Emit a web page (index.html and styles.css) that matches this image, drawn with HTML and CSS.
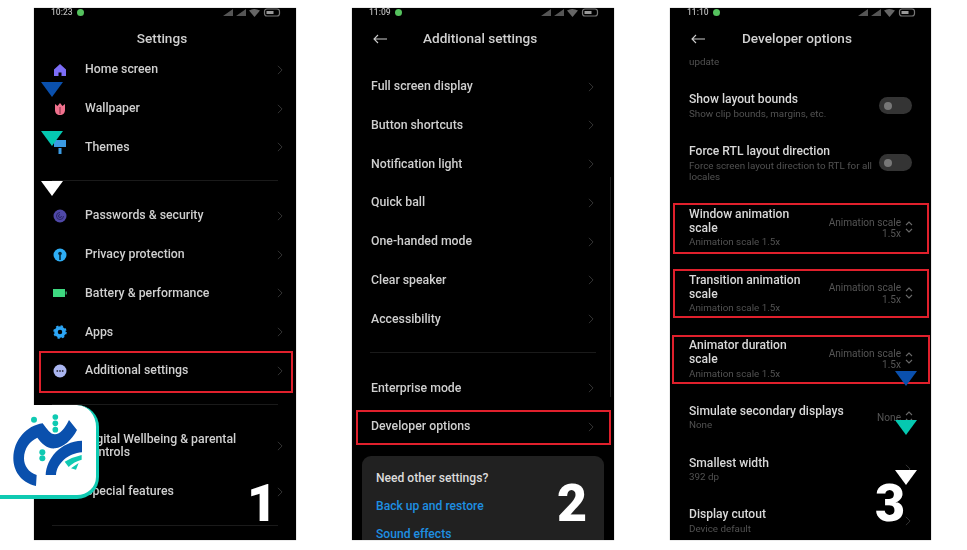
FILE: index.html
```html
<!DOCTYPE html>
<html lang="en">
<head>
<meta charset="utf-8">
<title>Developer options steps</title>
<link rel="stylesheet" href="styles.css">
</head>
<body>
<svg class="defs" width="0" height="0" aria-hidden="true">
  <defs>
    <symbol id="chev" viewBox="0 0 7 12"><path d="M1 1l5 5-5 5" fill="none" stroke="#333" stroke-width="1.2"/></symbol>
    <symbol id="updown" viewBox="0 0 8 14"><path d="M1 5l3-3 3 3M1 9l3 3 3-3" fill="none" stroke="#6a6a6a" stroke-width="1.1"/></symbol>
    <symbol id="stat" viewBox="0 0 58 9">
      <path d="M0 8L10 1v7z M13 8L23 1v7z" fill="#555"/>
      <path d="M26 2.5q5-3 11 0L31.500 9z" fill="#666"/>
      <rect x="41.500" y="1" width="15" height="7" rx="2.500" fill="none" stroke="#777" stroke-width="1.200"/>
      <rect x="43.500" y="3" width="7" height="3" fill="#999"/>
    </symbol>
    <symbol id="back" viewBox="0 0 14 10"><path d="M14 5H1M5 1L1 5l4 4" fill="none" stroke="#ccc" stroke-width="1.100"/></symbol>
  </defs>
</svg>

<main class="stage">
  <section class="phone phone-first">
    <div class="status"><span class="time">10:23</span><i class="dot"></i><svg class="stat"><use href="#stat"/></svg></div>
    <h1 class="title title-center">Settings</h1>
    <ul class="list">
      <li class="row"><svg class="ico" viewBox="0 0 14 14"><path d="M7 1l6 5.500V13H8.500V9.500h-3V13H1V6.500z" fill="#7c6df7"/></svg><span class="label">Home screen</span><svg class="chev"><use href="#chev"/></svg></li>
      <li class="row"><svg class="ico" viewBox="0 0 14 14"><path d="M2 2l2.500 2L7 1l2.500 3L12 2v6c0 3-2 5-5 5s-5-2-5-5z" fill="#f0718d"/><path d="M7 5v7" stroke="#7a2c40"/></svg><span class="label">Wallpaper</span><svg class="chev"><use href="#chev"/></svg></li>
      <li class="row"><svg class="ico" viewBox="0 0 14 14"><path d="M1 0h12v7H1zM5.500 8h3v6h-3z" fill="#3b9ae2"/></svg><span class="label">Themes</span><svg class="chev"><use href="#chev"/></svg></li>
      <li class="rule rule-first"></li>
      <li class="row"><svg class="ico" viewBox="0 0 14 14"><circle cx="7" cy="7" r="6.500" fill="#4f48a8"/><path d="M7 3.500a3.500 3.500 0 1 0 3.500 3.500M7 5.500a1.500 1.500 0 1 0 1.500 1.500" fill="none" stroke="#2a2666"/></svg><span class="label">Passwords &amp; security</span><svg class="chev"><use href="#chev"/></svg></li>
      <li class="row"><svg class="ico" viewBox="0 0 14 14"><circle cx="7" cy="7" r="6.500" fill="#2eaef6"/><circle cx="7" cy="5.500" r="1.800" fill="#06283c"/><path d="M6.200 6h1.600v6H6.200z" fill="#06283c"/></svg><span class="label">Privacy protection</span><svg class="chev"><use href="#chev"/></svg></li>
      <li class="row"><svg class="ico" viewBox="0 0 14 14"><path d="M0 3h12v8H0z" fill="#3ed880"/><path d="M12.500 5.500H14v3h-1.500z" fill="#2a9a5c"/></svg><span class="label">Battery &amp; performance</span><svg class="chev"><use href="#chev"/></svg></li>
      <li class="row"><svg class="ico" viewBox="0 0 14 14"><circle cx="7" cy="7" r="4" fill="none" stroke="#2ca6f6" stroke-width="3.500"/><circle cx="7" cy="7" r="6" fill="none" stroke="#2ca6f6" stroke-width="1.500" stroke-dasharray="2.400 2.300"/></svg><span class="label">Apps</span><svg class="chev"><use href="#chev"/></svg></li>
      <li class="row"><svg class="ico" viewBox="0 0 14 14"><circle cx="7" cy="7" r="6.500" fill="#aab5f0"/><circle cx="4.300" cy="7" r=".9" fill="#334"/><circle cx="7" cy="7" r=".9" fill="#334"/><circle cx="9.700" cy="7" r=".9" fill="#334"/></svg><span class="label">Additional settings</span><svg class="chev"><use href="#chev"/></svg></li>
      <li class="rule"></li>
      <li class="row row-tall"><span class="ico"></span><span class="label">Digital Wellbeing &amp; parental controls</span><svg class="chev"><use href="#chev"/></svg></li>
      <li class="row"><span class="ico"></span><span class="label">Special features</span><svg class="chev"><use href="#chev"/></svg></li>
      <li class="rule"></li>
    </ul>
  </section>

  <section class="phone phone-second">
    <div class="status"><span class="time">11:09</span><i class="dot"></i><svg class="stat"><use href="#stat"/></svg></div>
    <h1 class="title"><svg class="back"><use href="#back"/></svg>Additional settings</h1>
    <ul class="list list-plain">
      <li class="row"><span class="label">Full screen display</span><svg class="chev"><use href="#chev"/></svg></li>
      <li class="row"><span class="label">Button shortcuts</span><svg class="chev"><use href="#chev"/></svg></li>
      <li class="row"><span class="label">Notification light</span><svg class="chev"><use href="#chev"/></svg></li>
      <li class="row"><span class="label">Quick ball</span><svg class="chev"><use href="#chev"/></svg></li>
      <li class="row"><span class="label">One-handed mode</span><svg class="chev"><use href="#chev"/></svg></li>
      <li class="row"><span class="label">Clear speaker</span><svg class="chev"><use href="#chev"/></svg></li>
      <li class="row"><span class="label">Accessibility</span><svg class="chev"><use href="#chev"/></svg></li>
      <li class="rule"></li>
      <li class="row"><span class="label">Enterprise mode</span><svg class="chev"><use href="#chev"/></svg></li>
      <li class="row"><span class="label">Developer options</span><svg class="chev"><use href="#chev"/></svg></li>
    </ul>
    <div class="card">
      <p class="card-head">Need other settings?</p>
      <p class="card-link">Back up and restore</p>
      <p class="card-link">Sound effects</p>
    </div>
    <i class="scrollbar"></i>
  </section>

  <section class="phone phone-narrow">
    <div class="status"><span class="time">11:10</span><i class="dot"></i><svg class="stat"><use href="#stat"/></svg></div>
    <h1 class="title"><svg class="back"><use href="#back"/></svg>Developer options</h1>
    <div class="prefs">
      <p class="sub">update</p>
      <div class="pref"><div class="pref-text"><p class="name">Show layout bounds</p><p class="sub">Show clip bounds, margins, etc.</p></div><span class="toggle"><i></i></span></div>
      <div class="pref"><div class="pref-text"><p class="name">Force RTL layout direction</p><p class="sub sub-limit">Force screen layout direction to RTL for all locales</p></div><span class="toggle"><i></i></span></div>
      <div class="pref"><div class="pref-text"><p class="name name-wrap">Window animation scale</p><p class="sub">Animation scale 1.5x</p></div><span class="value value-wide">Animation scale 1.5x</span><svg class="updown"><use href="#updown"/></svg></div>
      <div class="pref"><div class="pref-text"><p class="name name-wrap">Transition animation scale</p><p class="sub">Animation scale 1.5x</p></div><span class="value value-wide">Animation scale 1.5x</span><svg class="updown"><use href="#updown"/></svg></div>
      <div class="pref"><div class="pref-text"><p class="name name-wrap">Animator duration scale</p><p class="sub">Animation scale 1.5x</p></div><span class="value value-wide">Animation scale 1.5x</span><svg class="updown"><use href="#updown"/></svg></div>
      <div class="pref"><div class="pref-text"><p class="name">Simulate secondary displays</p><p class="sub">None</p></div><span class="value">None</span><svg class="updown"><use href="#updown"/></svg></div>
      <div class="pref"><div class="pref-text"><p class="name">Smallest width</p><p class="sub">392 dp</p></div><svg class="chev chev-pref"><use href="#chev"/></svg></div>
      <div class="pref"><div class="pref-text"><p class="name">Display cutout</p><p class="sub">Device default</p></div><svg class="chev chev-pref"><use href="#chev"/></svg></div>
    </div>
  </section>
</main>

<div class="hl hl-1"></div>
<div class="hl hl-2"></div>
<div class="hl hl-3"></div>
<div class="hl hl-4"></div>
<div class="hl hl-5"></div>

<i class="tri tri-blue tri-a1"></i>
<i class="tri tri-teal tri-a2"></i>
<i class="tri tri-white tri-a3"></i>
<i class="tri tri-blue tri-b1"></i>
<i class="tri tri-teal tri-b2"></i>
<i class="tri tri-white tri-b3"></i>

<b class="num num-1">1</b>
<b class="num num-2">2</b>
<b class="num num-3">3</b>

<div class="logo-card">
  <svg class="logo" viewBox="0 0 330 330">
    <path d="M108 273C60 262 40 225 40 190C40 135 80 92 128 85C142 103 150 118 165 118C180 118 195 100 207 75L231 105C215 135 190 158 165 160C140 162 125 145 112 128C90 138 72 160 72 190C72 212 85 232 110 240Z" fill="#0a50ad"/>
    <path d="M137 240C140 190 180 140 246 137V172C205 175 170 205 168 240Z" fill="#0a50ad"/>
    <path d="M194 200Q218 186 245 180V194Q222 200 206 216Z" fill="#0fcab2"/>
    <path d="M213 220L236 204L228 224Z" fill="#0fcab2"/>
    <g fill="#0fcab2">
      <circle cx="102" cy="74" r="9"/><circle cx="166" cy="66" r="8.500"/><circle cx="166" cy="85" r="8.500"/><circle cx="166" cy="104" r="8.500"/>
      <circle cx="127" cy="172" r="9"/><circle cx="127" cy="190" r="9"/>
    </g>
  </svg>
</div>
</body>
</html>
```
FILE: styles.css
```css
* { box-sizing: border-box; }
html, body { margin: 0; height: 550px; overflow: hidden; background: #fff; }
body { position: relative; font-family: Roboto, "Liberation Sans", sans-serif; }
p, h1, ul { margin: 0; padding: 0; }
ul { list-style: none; }
.defs { position: absolute; }

.stage { display: flex; gap: 56px; padding: 8px 0 0 34px; }
.phone {
  position: relative;
  flex: none;
  display: flex;
  flex-direction: column;
  width: 262px;
  height: 532px;
  overflow: hidden;
  background: #000;
  box-shadow: 0 0 1px #888;
  filter: blur(.4px);
}
.phone-narrow { width: 261px; }

.status { display: flex; align-items: center; flex: none; height: 14px; padding: 0 15px 6px 17px; }
.time { font-size: 8.500px; font-weight: 500; color: #b5b5b5; line-height: 8px; }
.dot { width: 7px; height: 7px; margin-left: 4px; border-radius: 50%; background: #55c25e; }
.stat { width: 58px; height: 9px; margin-left: auto; }

.title {
  display: flex;
  align-items: center;
  flex: none;
  height: 28px;
  padding: 8px 0 3px 21px;
  font-size: 13.600px;
  font-weight: 500;
  line-height: 17px;
  color: #d0d0d0;
}
.title-center { justify-content: center; padding-left: 0; padding-right: 6px; }
.back { width: 14px; height: 10px; margin-right: 36px; }
.phone-narrow .back { margin-right: 37px; }

.list { padding-top: .6px; }
.row { display: flex; align-items: center; height: 38.750px; padding: 0 13px 0 19px; }
.phone-second .row { padding-right: 20px; }
.row-tall { height: 52px; }
.ico { flex: none; width: 14px; height: 14px; margin-right: 18px; }
.label { flex: 1; font-size: 12.300px; font-weight: 500; line-height: 13px; color: #cfcfcf; padding-right: 20px; }
.chev { flex: none; width: 6px; height: 10px; }
.rule { height: 1px; margin: 13.600px 18px 15.600px; background: #1a1a1a; }
.rule-first { margin-top: 13px; margin-bottom: 15.600px; }
.list-plain { padding-top: 17.200px; }

.card { flex: none; margin: 9.500px 10px 0; height: 100px; padding: 8px 14px; border-radius: 9px; background: #212121; font-size: 12.100px; font-weight: 500; }
.card-head { height: 28px; line-height: 28px; color: #dcdcdc; }
.card-link { height: 28px; line-height: 28px; color: #1e8fe2; }
.scrollbar { position: absolute; right: 3px; top: 169px; width: 1px; height: 220px; background: #1d1d1d; }

.prefs { display: flex; flex-direction: column; gap: 25.200px; padding: 6.300px 14px 0 19px; }
.pref { display: flex; align-items: center; }
.pref-text { flex: 1; min-width: 0; }
.name { font-size: 12.100px; font-weight: 500; line-height: 14px; color: #d8d8d8; }
.name-wrap { max-width: 122px; }
.sub { margin-top: 1.500px; font-size: 9.800px; line-height: 11px; color: #525252; }
.prefs > .sub { margin: 0; }
.sub-limit { max-width: 186px; }
.toggle { flex: none; display: flex; align-items: center; width: 33px; height: 17px; margin-right: 5px; padding-left: 5px; border-radius: 9px; background: #343434; }
.toggle i { width: 8px; height: 8px; border-radius: 50%; background: #777; }
.value { flex: none; margin-top: 2px; font-size: 10.100px; line-height: 11.500px; color: #555; text-align: right; }
.value-wide { width: 76px; }
.updown { flex: none; width: 8px; height: 14px; margin: 0 4px; }
.chev-pref { margin-right: 6px; }

.hl { position: absolute; border: 2px solid #e0202c; }
.hl-1 { left: 39px; top: 351px; width: 254px; height: 42px; }
.hl-2 { left: 356px; top: 410px; width: 255px; height: 35px; }
.hl-3 { left: 673px; top: 203px; width: 256px; height: 51px; }
.hl-4 { left: 673px; top: 269px; width: 256px; height: 49px; }
.hl-5 { left: 672px; top: 335px; width: 258px; height: 49px; }

.tri { position: absolute; width: 0; height: 0; border-left: 11px solid transparent; border-right: 11px solid transparent; border-top: 15px solid; }
.tri-blue { border-top-color: #0a50ad; }
.tri-teal { border-top-color: #05c8b0; }
.tri-white { border-top-color: #fff; }
.tri-a1 { left: 41px; top: 82px; }
.tri-a2 { left: 41px; top: 131px; }
.tri-a3 { left: 41px; top: 181px; }
.tri-b1 { left: 895px; top: 371px; }
.tri-b2 { left: 895px; top: 420px; }
.tri-b3 { left: 895px; top: 470px; }

.num { position: absolute; top: 474px; font-size: 52px; font-weight: 900; line-height: 60px; color: #fff; }
.num-1 { left: 247px; }
.num-2 { left: 557px; }
.num-3 { left: 875px; }

.logo-card {
  position: absolute;
  left: 0;
  top: 405px;
  width: 99px;
  height: 94px;
  background: #fff;
  border-right: 3px solid #0fcab2;
  border-bottom: 4px solid #0fcab2;
  border-radius: 0 22px 22px 0;
}
.logo { position: absolute; left: 0; top: -10px; width: 110px; height: 110px; }
```
